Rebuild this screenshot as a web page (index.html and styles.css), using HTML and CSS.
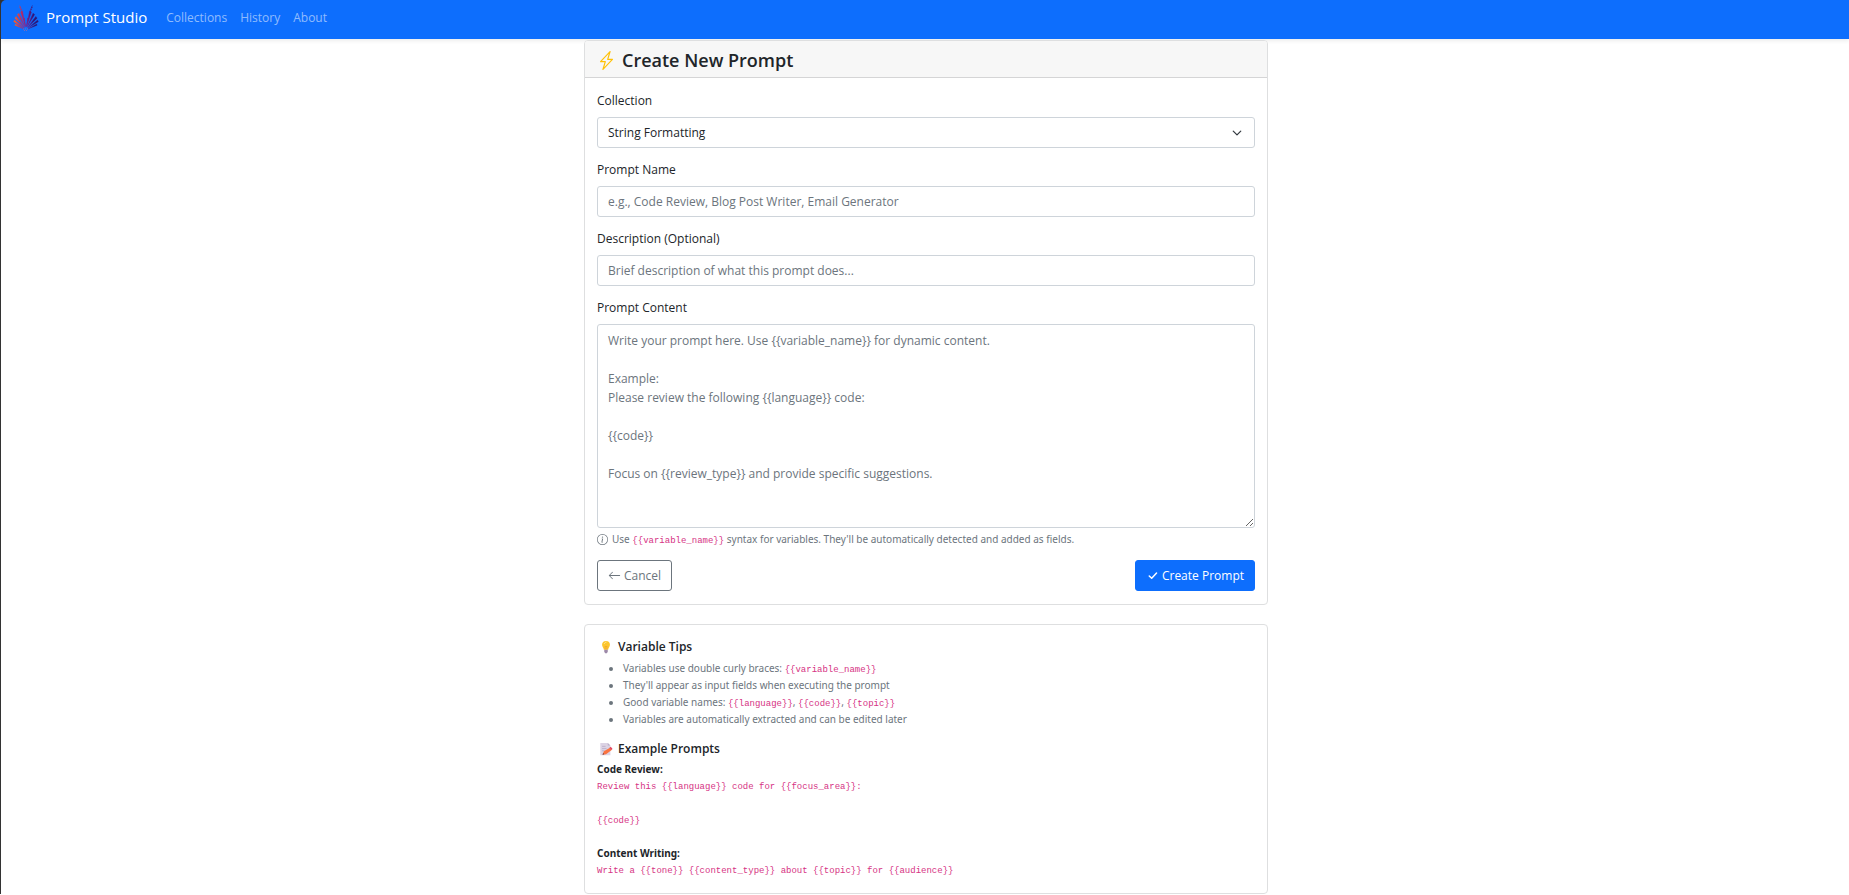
FILE: index.html
```html
<!DOCTYPE html>
<html lang="en">
<head>
<meta charset="utf-8">
<title>Prompt Studio</title>
<link rel="stylesheet" href="styles.css">
</head>
<body>
<header class="topbar">
  <nav class="navbar">
    <a class="brand" href="#">
      <svg class="logo" viewBox="0 0 26 26" aria-hidden="true">
        <defs>
          <linearGradient id="fan" gradientUnits="userSpaceOnUse" x1="0" y1="0" x2="26" y2="0">
            <stop offset=".1" stop-color="#f4582a"/>
            <stop offset=".3" stop-color="#c42a5c"/>
            <stop offset=".5" stop-color="#8a1a82"/>
            <stop offset=".8" stop-color="#2c1478"/>
          </linearGradient>
        </defs>
        <g fill="none" stroke="url(#fan)">
          <path stroke-width="1.300" stroke-dasharray="1.500 .7" d="M9 7 6.500 .5M17 7 19.500 .5"/>
        </g>
        <g fill="url(#fan)" stroke="url(#fan)" stroke-width=".3">
          <path d="M12.300 21 7.600 7 9.600 6.500zM13.700 21 18.400 7 16.400 6.500z"/>
          <path d="M12 22 4.300 9.500 6 8.200zM14 22 21.700 9.500 20 8.200z"/>
          <path d="M11.500 22.500 1.800 13.200 3.200 11.400zM14.500 22.500 24.200 13.200 22.800 11.400z"/>
          <path d="M11 23 .6 16.700 1.400 15zM15 23 25.400 16.700 24.600 15z"/>
          <path d="M11 24 1.800 20.200 2.400 19zM15 24 24.200 20.200 23.600 19z"/>
          <path d="M12.600 22 10.600 13h.8zM13.400 22 15.400 13h-.8z"/>
        </g>
        <path d="M10 24h6M11 25.500h4" stroke="#7b6bb8" stroke-width="1" stroke-dasharray="1 1"/>
      </svg>
      <span>Prompt Studio</span>
    </a>
    <div class="nav-links">
      <a href="#">Collections</a>
      <a href="#">History</a>
      <a href="#">About</a>
    </div>
  </nav>
</header>

<main class="content">
  <section class="card">
    <h1 class="card-header">
      <svg class="bolt" viewBox="0 0 16 16" fill="currentColor" aria-hidden="true"><path d="M11.251.068a.5.5 0 0 1 .227.58L9.677 6.500H13a.5.5 0 0 1 .364.843l-8 8.500a.5.5 0 0 1-.842-.490L6.323 9.500H3a.5.5 0 0 1-.364-.843l8-8.500a.5.5 0 0 1 .615-.090zM4.157 8.500H7a.5.5 0 0 1 .478.647L6.110 13.590l5.732-6.090H9a.5.5 0 0 1-.478-.647L9.890 2.410z"/></svg>
      <span>Create New Prompt</span>
    </h1>
    <form class="card-body form">
      <div class="field">
        <label for="collection">Collection</label>
        <select id="collection" class="control select"><option>String Formatting</option></select>
      </div>
      <div class="field">
        <label for="name">Prompt Name</label>
        <input id="name" class="control" type="text" placeholder="e.g., Code Review, Blog Post Writer, Email Generator">
      </div>
      <div class="field">
        <label for="description">Description (Optional)</label>
        <input id="description" class="control" type="text" placeholder="Brief description of what this prompt does...">
      </div>
      <div class="field">
        <label for="content">Prompt Content</label>
        <textarea id="content" class="control textarea" rows="10" placeholder="Write your prompt here. Use {{variable_name}} for dynamic content.

Example:
Please review the following {{language}} code:

{{code}}

Focus on {{review_type}} and provide specific suggestions."></textarea>
        <p class="hint">
          <svg class="hint-icon" viewBox="0 0 16 16" fill="currentColor" aria-hidden="true"><path d="M8 15A7 7 0 1 1 8 1a7 7 0 0 1 0 14m0 1A8 8 0 1 0 8 0a8 8 0 0 0 0 16"/><path d="m8.930 6.588-2.290.287-.082.380.450.083c.294.070.352.176.288.469l-.738 3.468c-.194.897.105 1.319.808 1.319.545 0 1.178-.252 1.465-.598l.088-.416c-.200.176-.492.246-.686.246-.275 0-.375-.193-.304-.533zM9 4.500a1 1 0 1 1-2 0 1 1 0 0 1 2 0"/></svg>
          <span>Use <code>{{variable_name}}</code> syntax for variables. They'll be automatically detected and added as fields.</span>
        </p>
      </div>
      <div class="actions">
        <button type="button" class="btn btn-outline">
          <svg viewBox="0 0 16 16" fill="currentColor" aria-hidden="true"><path fill-rule="evenodd" d="M15 8a.5.5 0 0 0-.5-.5H2.707l3.147-3.146a.5.5 0 1 0-.708-.708l-4 4a.5.5 0 0 0 0 .708l4 4a.5.5 0 0 0 .708-.708L2.707 8.500H14.500A.5.5 0 0 0 15 8"/></svg>
          Cancel
        </button>
        <button type="submit" class="btn btn-primary">
          <svg viewBox="0 0 16 16" fill="none" stroke="currentColor" stroke-width="1.800" stroke-linecap="round" stroke-linejoin="round" aria-hidden="true"><path d="m4 8.500 3 3 6-6.500"/></svg>
          Create Prompt
        </button>
      </div>
    </form>
  </section>

  <section class="card card-body tips">
    <h2>
      <svg viewBox="0 0 16 16" aria-hidden="true"><path d="M8 1a4.500 4.500 0 0 0-4.500 4.500c0 2.300 1.700 3.200 2 5.500h5c.3-2.300 2-3.200 2-5.500A4.500 4.500 0 0 0 8 1z" fill="#fcc62d"/><path d="M6 4.500c.5-1.500 1.500-2 2.500-2" stroke="#ffe9a0" fill="none"/><path d="M7 11V7l1 1 1-1v4" stroke="#f19a2a" stroke-width=".7" fill="none"/><path d="M6 11h4v2.500L9 15H7l-1-1.500z" fill="#9d89a8"/></svg>
      <span>Variable Tips</span>
    </h2>
    <ul>
      <li>Variables use double curly braces: <code>{{variable_name}}</code></li>
      <li>They'll appear as input fields when executing the prompt</li>
      <li>Good variable names: <code>{{language}}</code>, <code>{{code}}</code>, <code>{{topic}}</code></li>
      <li>Variables are automatically extracted and can be edited later</li>
    </ul>
    <h2>
      <svg viewBox="0 0 16 16" aria-hidden="true"><path d="M1.500 1h8.500l3 3v11h-11.500z" fill="#dcd3e4"/><path d="M10 1v3h3z" fill="#b9aec8"/><path d="M3.500 5h4M3.500 7.500h5M3.500 10h3" stroke="#b3a6c2" stroke-width=".8"/><path d="m4 14.500 1.500-4 7-4 2 2.500-6.500 5z" fill="#fb7340"/><path d="m12 6.500 1.500-1 2 2.500-1.500 1z" fill="#e2405e"/><path d="m4 14.500.7-2 1.300 1.500z" fill="#5c3b46"/></svg>
      <span>Example Prompts</span>
    </h2>
    <div class="example">
      <strong>Code Review:</strong>
      <code>Review this {{language}} code for {{focus_area}}:

{{code}}</code>
    </div>
    <div class="example">
      <strong>Content Writing:</strong>
      <code>Write a {{tone}} {{content_type}} about {{topic}} for {{audience}}</code>
    </div>
  </section>
</main>
</body>
</html>
```
FILE: styles.css
```css
* { box-sizing: border-box; }

body {
  margin: 0;
  border-left: 1px solid #333;
  background: #fff;
  color: #212529;
  font: 12px/19px "Segoe UI", "Open Sans", "Noto Sans", sans-serif;
}

.topbar {
  background: #333;
  box-shadow: 0 2px 4px rgba(0, 0, 0, .075);
}

.navbar {
  display: flex;
  align-items: center;
  gap: 19px;
  padding: 4px 12px 8px;
  border-top-left-radius: 5px;
  background: #0d6efd;
}

.brand {
  display: flex;
  align-items: center;
  gap: 7px;
  color: #fff;
  font-size: 15px;
  line-height: 27px;
  text-decoration: none;
}

.logo { width: 26px; height: 26px; }

.nav-links { display: flex; gap: 13px; }

.nav-links a {
  color: rgba(255, 255, 255, .55);
  text-decoration: none;
}

.content {
  display: grid;
  gap: 19px;
  width: 100%;
  max-width: 686px;
  margin: 1px auto 0;
  padding-left: 2px;
}

.card {
  border: 1px solid #dedfe0;
  border-radius: 4px;
  background: #fff;
}

.card-header {
  display: flex;
  align-items: center;
  gap: 6px;
  margin: 0;
  padding: 7px 12px 5px;
  border-bottom: 1px solid #d5d5d6;
  border-radius: 3px 3px 0 0;
  background: #f7f7f7;
  font-size: 18px;
  font-weight: 600;
  line-height: 24px;
}

.bolt { width: 19px; height: 19px; color: #ffc107; }

.card-body { padding: 13px 12px; }

.form { display: grid; gap: 12px; }

.field { display: grid; }

.field label { margin-bottom: 7px; }

.control {
  width: 100%;
  min-width: 0;
  padding: 5px 10px;
  border: 1px solid #ced4da;
  border-radius: 3px;
  background: #fff;
  color: #212529;
  font: inherit;
}

.control::placeholder { color: #6c757d; opacity: 1; }

.select {
  appearance: none;
  background: #fff url("data:image/svg+xml,%3Csvg xmlns='http://www.w3.org/2000/svg' viewBox='0 0 16 16'%3E%3Cpath fill='none' stroke='%23343a40' stroke-linecap='round' stroke-linejoin='round' stroke-width='2' d='m2 5 6 6 6-6'/%3E%3C/svg%3E") no-repeat right 12px center / 10px 10px;
}

.textarea {
  display: block;
  padding: 6px 10px;
  resize: vertical;
}

.hint {
  display: flex;
  align-items: center;
  gap: 4px;
  margin: 3px 0 0;
  color: #6c757d;
}

.hint-icon { width: 11px; height: 11px; }

.hint,
.tips ul,
.example {
  font-family: "Segoe UI", "Noto Sans", sans-serif;
  font-size: 10px;
  line-height: 17px;
}

code {
  color: #d63384;
  font-family: Consolas, "Liberation Mono", monospace;
  font-size: 9px;
}

.hint code,
.tips li code { line-height: 1; }

.actions { display: flex; justify-content: space-between; }

.btn {
  display: flex;
  align-items: center;
  gap: 3px;
  padding: 5px 10px;
  border: 1px solid;
  border-radius: 3px;
  font: inherit;
}

.btn svg { width: 13px; height: 13px; }

.btn-outline { border-color: #6c757d; background: #fff; color: #6c757d; }

.btn-primary { border-color: #0d6efd; background: #0d6efd; color: #fff; }

.tips h2 {
  display: flex;
  align-items: center;
  gap: 5px;
  margin: 0;
  padding-left: 2px;
  font-size: 12px;
  font-weight: 600;
  line-height: 17px;
}

.tips h2 svg { width: 14px; height: 14px; }

.tips ul {
  margin: 5px 0 12px;
  padding-left: 26px;
  color: #6c757d;
}

.example {
  display: grid;
  gap: 1px;
  margin-top: 4px;
}

.example + .example { margin-top: 15px; }

.example code { white-space: pre-wrap; }
```
